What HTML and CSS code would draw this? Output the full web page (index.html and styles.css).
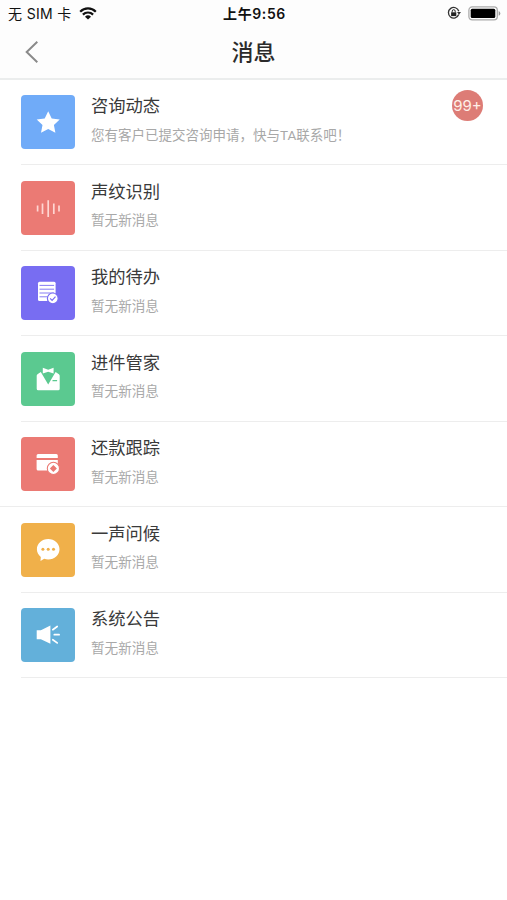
FILE: index.html
```html
<!DOCTYPE html>
<html lang="zh-CN">
<head>
<meta charset="utf-8">
<title>消息</title>
<link rel="stylesheet" href="styles.css">
</head>
<body>
<header class="header">
  <div class="status">
    <div class="carrier"><span>无 SIM 卡</span>
      <svg class="wifi" width="18" height="13" viewBox="0 0 18 13"><path d="M1.2 4.7a11 11 0 0 1 15.6 0M3.9 7.6a7.2 7.2 0 0 1 10.2 0" fill="none" stroke="#111" stroke-width="2.2"/><path d="M9 12.6 6 9.7a4.3 4.3 0 0 1 6 0z" fill="#111"/></svg>
    </div>
    <div class="time">上午9:56</div>
    <div class="indicators">
      <svg width="14" height="14" viewBox="0 0 14 14"><path d="M11.7 8.6A5.3 5.3 0 1 1 11.8 5.2" fill="none" stroke="#333" stroke-width="1.3"/><path d="M10 6h4l-2 2.8z" fill="#333"/><path d="M4.1 6.3h5.2v3.8H4.1z" fill="#222"/><path d="M5.2 6.4V5.2a1.5 1.5 0 0 1 3 0v1.2" fill="none" stroke="#222"/></svg>
      <svg width="33" height="15" viewBox="0 0 33 15"><rect x=".9" y=".9" width="28.4" height="13" rx="3.3" fill="#fff" stroke="#aaa" stroke-width="1.3"/><rect x="2.7" y="2.7" width="24.6" height="9.4" rx="1.5" fill="#000"/><path d="M30.7 5v4.8q1.6-.8 1.6-2.4T30.7 5z" fill="#999"/></svg>
    </div>
  </div>
  <nav class="nav">
    <svg class="back" width="14" height="24" viewBox="0 0 14 24"><path d="M12.3 1.8 1.7 12l10.6 10.2" fill="none" stroke="#8a8a8a" stroke-width="2"/></svg>
    <h1>消息</h1>
  </nav>
</header>
<main class="list">
  <section class="row">
    <svg class="icon blue" viewBox="0 0 54 54"><path d="m27.2 16.3 3.5 7.1 8 1.1-5.8 5.5 1.5 7.8-7.2-3.8-7.2 3.8 1.5-7.8-5.8-5.5 8-1.1z" fill="#fff"/></svg>
    <div class="text"><h2>咨询动态</h2><p class="preview">您有客户已提交咨询申请，快与TA联系吧！</p></div>
    <span class="badge">99+</span>
  </section>
  <section class="row">
    <svg class="icon red" viewBox="0 0 54 54"><path d="M16.6 24.6v6M21.5 22.5v10.4M27.2 19.3v16.6M32.8 22.5v10.4M38 24.6v6" fill="none" stroke="#ffd6d2" stroke-width="1.7"/></svg>
    <div class="text"><h2>声纹识别</h2><p>暂无新消息</p></div>
  </section>
  <section class="row">
    <svg class="icon purple" viewBox="0 0 54 54"><rect x="17" y="15.7" width="17.6" height="19.3" rx="1.5" fill="#fff"/><path d="M18.5 19.4h14.6M18.5 23.2h14.6M18.5 27h14.6M18.5 30.8h8" stroke="#786df2" stroke-width=".9"/><circle cx="31.8" cy="32.4" r="5.4" fill="#fff" stroke="#786df2" stroke-width="1.2"/><path d="m29.1 32.3 2 2 3.4-3.6" fill="none" stroke="#786df2" stroke-width="1.2"/></svg>
    <div class="text"><h2>我的待办</h2><p>暂无新消息</p></div>
  </section>
  <section class="row">
    <svg class="icon green" viewBox="0 0 54 54"><path d="m19.8 20-3.3 2.2q-.8.6-.8 1.5v13.1q0 1.5 1.5 1.5h20q1.5 0 1.5-1.5V23.7q0-.9-.8-1.5L34.6 20l-7.4 12.5zM21.8 15.8l5.4 2 5.4-2v5.6l-5.4-1.7-5.4 1.7z" fill="#fff"/><path d="M31.5 28.6h4.6" stroke="#5bc990" stroke-width="1.3"/></svg>
    <div class="text"><h2>进件管家</h2><p>暂无新消息</p></div>
  </section>
  <section class="row wide">
    <svg class="icon red" viewBox="0 0 54 54"><path d="M15.6 20.9v-2.4q0-1.5 1.5-1.5h18.2q1.5 0 1.5 1.5v2.4zM15.6 23h21.2v10.5H17.1q-1.5 0-1.5-1.5z" fill="#fff"/><circle cx="32.4" cy="31.4" r="6.1" fill="#fff" stroke="#eb7a74" stroke-width="1.1"/><path d="M32.4 27.9l3.5 3.5-3.5 3.5-3.5-3.5z" fill="#eb7a74"/><path d="M32.4 29.7v3.4M30.7 31.4h3.4" stroke="#eb7a74" stroke-width="2.8"/></svg>
    <div class="text"><h2>还款跟踪</h2><p>暂无新消息</p></div>
  </section>
  <section class="row">
    <svg class="icon orange" viewBox="0 0 54 54"><path d="M27.2 16.1c6.3 0 11.3 4.5 11.3 10.2s-5 10.2-11.3 10.2c-1.4 0-2.8-.2-4-.7l-3.7 2.3.3-4.2c-2.4-1.8-3.9-4.5-3.9-7.6 0-5.7 5-10.2 11.3-10.2z" fill="#fff"/><g fill="#f0b04a"><circle cx="21.9" cy="26.2" r="1.5"/><circle cx="27.2" cy="26.2" r="1.5"/><circle cx="32.5" cy="26.2" r="1.5"/></g></svg>
    <div class="text"><h2>一声问候</h2><p>暂无新消息</p></div>
  </section>
  <section class="row">
    <svg class="icon sky" viewBox="0 0 54 54"><path d="M15.7 22.2h4.2l9.5-4.6v18.2l-9.5-4.6h-4.2z" fill="#fff"/><path d="m31.8 21.7 4.4-3.2M33.3 26.7h4.8M31.8 31.7l4.4 3.2" stroke="#fff" stroke-width="1.7" stroke-linecap="round"/></svg>
    <div class="text"><h2>系统公告</h2><p>暂无新消息</p></div>
  </section>
</main>
</body>
</html>
```
FILE: styles.css
```css
* { box-sizing: border-box; }
body {
  margin: 0;
  min-height: 900px;
  background: #fff;
  color: #333;
  font-family: Inter, "Noto Sans CJK SC", sans-serif;
}
h1, h2, p { margin: 0; font-weight: 400; white-space: nowrap; }
svg { display: block; flex: none; }
.header { height: 79.5px; background: #fdfdfd; border-bottom: 2px solid #ebeded; }
.status {
  display: grid;
  grid-template-columns: 1fr auto 1fr;
  align-items: center;
  height: 26px;
  padding: 0 6px 0 8px;
  color: #111;
  font-size: 14px;
}
.carrier, .indicators { display: flex; align-items: center; }
.carrier { gap: 7px; letter-spacing: .35px; }
.time { font-weight: 600; font-size: 14px; letter-spacing: .6px; }
.indicators { justify-content: flex-end; gap: 7px; }
.nav {
  display: grid;
  grid-template-columns: 1fr auto 1fr;
  align-items: center;
  height: 52px;
  padding: 0 25px;
}
.nav h1 { font-size: 22px; font-weight: 500; line-height: 30px; color: #2b2b2b; }
.row {
  display: flex;
  position: relative;
  height: 85.5px;
  padding: 15.5px 24px 0 0;
  margin-left: 21px;
  border-bottom: 1.5px solid #ededed;
}
.wide { margin-left: 0; padding-left: 21px; }
.icon { width: 54px; height: 54px; border-radius: 4px; }
.blue { background: #70abf8; }
.red { background: #eb7a74; }
.purple { background: #786df2; }
.green { background: #5bc990; }
.orange { background: #f0b04a; }
.sky { background: #63b0da; }
.text { flex: 1; margin-left: 16px; }
.text h2 { font-size: 17.3px; line-height: 22px; color: #3a3a3a; }
.text p { margin-top: 7.5px; font-size: 13.6px; line-height: 20px; color: #a8a8a8; }
.text .preview { font-family: Roboto, "Noto Sans CJK SC", sans-serif; font-size: 13.5px; }
.badge {
  width: 31px;
  height: 31px;
  margin-top: -5px;
  border-radius: 50%;
  background: #dd7c76;
  color: #fff0e8;
  font-size: 15px;
  line-height: 31px;
  text-align: center;
}
```
